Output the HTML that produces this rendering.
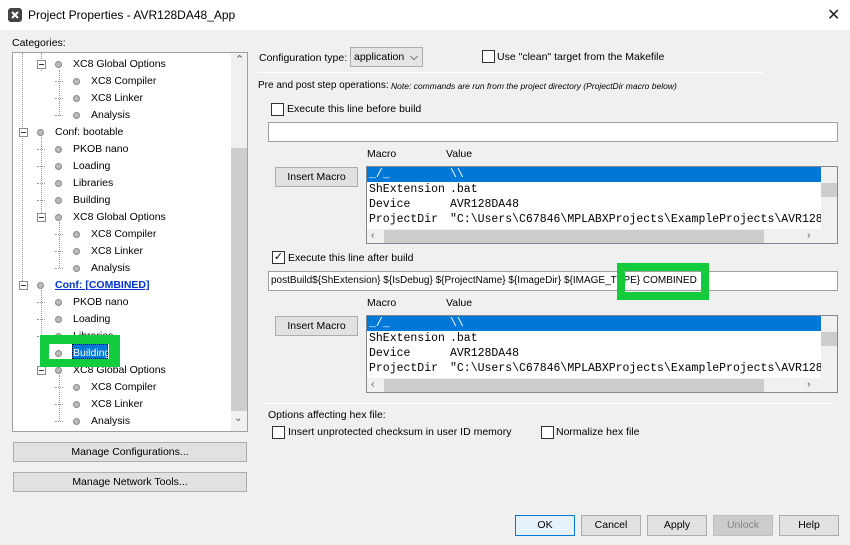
<!DOCTYPE html>
<html><head><meta charset="utf-8"><style>
*{box-sizing:border-box;margin:0;padding:0}
body{width:850px;height:545px;background:#f0f0f0;font-family:"Liberation Sans",sans-serif;font-size:10.5px;color:#000;position:relative;overflow:hidden}
.a{position:absolute;white-space:nowrap}
.btn{position:absolute;background:#e1e1e1;border:1px solid #adadad;text-align:center;font-size:10.5px}
.cb{position:absolute;width:13px;height:13px;border:1px solid #333;background:#fff}
.fld{position:absolute;background:#fff;border:1px solid #a0a0a0}
.mono{font-family:"Liberation Mono",monospace;font-size:11.5px}
.tr{position:absolute;font-size:10.5px;line-height:13px}
.ic{position:absolute;width:7px;height:7px;border-radius:50%;background:#bbb;border:1px solid #888}
.ex{position:absolute;width:9px;height:9px;border:1px solid #8a8a8a;background:#fff}
.ex:after{content:"";position:absolute;left:1px;top:3px;width:5px;height:1px;background:#333}
.dv{position:absolute;border-left:1px dotted #999}
.dh{position:absolute;border-top:1px dotted #999;width:8px}
</style></head><body>
<div class="a" style="left:0;top:0;width:850px;height:30px;background:#fff"></div>
<svg class="a" style="left:7px;top:7px" width="16" height="16" viewBox="0 0 16 16"><path d="M3 1h10l2 2v10l-2 2H3l-2-2V3z" fill="#444"/><path d="M5 5l6 6M11 5l-6 6" stroke="#fff" stroke-width="2"/></svg>
<div class="a" style="left:28px;top:8px;font-size:12px">Project Properties - AVR128DA48_App</div>
<div class="a" style="left:827px;top:5px;font-size:16px;color:#222">✕</div>

<div class="a" style="left:12px;top:37px">Categories:</div>
<div class="a" style="left:12px;top:52px;width:236px;height:380px;background:#fff;border:1px solid #a0a0a0;overflow:hidden">
<div class="a" style="left:218px;top:0;width:17px;height:378px;background:#f0f0f0"></div>
<div class="a" style="left:218px;top:95px;width:17px;height:263px;background:#cdcdcd"></div>
<div class="a" style="left:222px;top:0;font-size:11px;color:#555">&#8963;</div>
<div class="a" style="left:221px;top:360px;font-size:10px;color:#555">&#8964;</div>
</div>
<div class="a" style="left:72px;top:344px;width:36px;height:15px;background:#0078d7;border:1px dotted #000"></div>
<div id="tree"></div>
<div class="a" style="left:40px;top:335px;width:80px;height:32px;border:solid #12cc3e;border-width:9px 11px 8px 9px"></div>

<div class="btn" style="left:13px;top:442px;width:234px;height:20px;line-height:18px">Manage Configurations...</div>
<div class="btn" style="left:13px;top:472px;width:234px;height:20px;line-height:18px">Manage Network Tools...</div>

<div class="a" style="left:259px;top:52px">Configuration type:</div>
<div class="a" style="left:350px;top:47px;width:73px;height:20px;background:#e5e5e5;border:1px solid #adadad;padding:3px 3px">application &nbsp;⌵</div>
<div class="cb" style="left:482px;top:50px"></div>
<div class="a" style="left:497px;top:51px">Use "clean" target from the Makefile</div>
<div class="a" style="left:258px;top:72px;width:505px;height:1px;background:#d0d0d0;border-bottom:1px solid #fff"></div>
<div class="a" style="left:258px;top:80px;font-size:10px">Pre and post step operations:</div>
<div class="a" style="left:391px;top:81px;font-size:8.5px;font-style:italic">Note: commands are run from the project directory (ProjectDir macro below)</div>
<div class="cb" style="left:271px;top:103px"></div>
<div class="a" style="left:287px;top:103px">Execute this line before build</div>
<div class="fld" style="left:268px;top:122px;width:570px;height:20px"></div>

<div id="t1"></div>

<div class="cb" style="left:272px;top:251px;font-size:11px;line-height:11px;text-align:center">✓</div>
<div class="a" style="left:288px;top:252px">Execute this line after build</div>
<div class="fld" style="left:268px;top:271px;width:570px;height:20px"></div>
<div class="a" style="left:271px;top:275px;font-size:10px">postBuild${ShExtension} ${IsDebug} ${ProjectName} ${ImageDir} ${IMAGE_TYPE} COMBINED</div>
<div class="a" style="left:617px;top:263px;width:92px;height:37px;border:8px solid #12cc3e"></div>

<div id="t2"></div>

<div class="a" style="left:264px;top:403px;width:570px;height:1px;background:#d0d0d0;border-bottom:1px solid #fff"></div>
<div class="a" style="left:268px;top:409px">Options affecting hex file:</div>
<div class="cb" style="left:272px;top:426px"></div>
<div class="a" style="left:288px;top:426px">Insert unprotected checksum in user ID memory</div>
<div class="cb" style="left:541px;top:426px"></div>
<div class="a" style="left:556px;top:426px">Normalize hex file</div>

<div class="btn" style="left:515px;top:515px;width:60px;height:21px;line-height:19px;background:#e5f1fb;border-color:#0078d7">OK</div>
<div class="btn" style="left:581px;top:515px;width:60px;height:21px;line-height:19px">Cancel</div>
<div class="btn" style="left:647px;top:515px;width:60px;height:21px;line-height:19px">Apply</div>
<div class="btn" style="left:713px;top:515px;width:60px;height:21px;line-height:19px;background:#ccc;border-color:#bfbfbf;color:#838383">Unlock</div>
<div class="btn" style="left:779px;top:515px;width:60px;height:21px;line-height:19px">Help</div>

<script>
function tbl(id,top){
var h='<div class="a" style="left:367px;top:'+(top-18)+'px">Macro</div><div class="a" style="left:446px;top:'+(top-18)+'px">Value</div>';
h+='<div class="btn" style="left:275px;top:'+(top+1)+'px;width:83px;height:20px;line-height:18px">Insert Macro</div>';
h+='<div class="a" style="left:366px;top:'+top+'px;width:472px;height:78px;background:#fff;border:1px solid #828790;overflow:hidden">';
h+='<div class="a" style="left:0;top:0;width:454px;height:15px;background:#0078d7"></div>';
var rows=[['_/_','\\\\'],['ShExtension','.bat'],['Device','AVR128DA48'],['ProjectDir','"C:\\Users\\C67846\\MPLABXProjects\\ExampleProjects\\AVR128DA48']];
rows.forEach(function(r,i){h+='<div class="a mono" style="left:2px;top:'+(i*15+1)+'px;width:452px;overflow:hidden;color:'+(i?'#000':'#fff')+'">'+r[0]+'<span style="position:absolute;left:81px">'+r[1]+'</span></div>';});
h+='<div class="a" style="left:454px;top:0;width:17px;height:62px;background:#f0f0f0"></div><div class="a" style="left:454px;top:16px;width:17px;height:14px;background:#cdcdcd"></div>';
h+='<div class="a" style="left:0;top:62px;width:471px;height:15px;background:#f0f0f0"></div><div class="a" style="left:17px;top:63px;width:380px;height:13px;background:#cdcdcd"></div>';
h+='<div class="a" style="left:4px;top:62px;color:#555">&lsaquo;</div><div class="a" style="left:440px;top:62px;color:#555">&rsaquo;</div></div>';
document.getElementById(id).innerHTML=h;}
tbl('t1',166);tbl('t2',315);
var T=[[2,'XC8 Global Options',1],[3,'XC8 Compiler'],[3,'XC8 Linker'],[3,'Analysis'],[1,'Conf: bootable',1],[2,'PKOB nano'],[2,'Loading'],[2,'Libraries'],[2,'Building'],[2,'XC8 Global Options',1],[3,'XC8 Compiler'],[3,'XC8 Linker'],[3,'Analysis'],[1,'Conf: [COMBINED]',1,1],[2,'PKOB nano'],[2,'Loading'],[2,'Libraries'],[2,'Building',0,2],[2,'XC8 Global Options',1],[3,'XC8 Compiler'],[3,'XC8 Linker'],[3,'Analysis']];
var h='<div class="dv" style="left:22px;top:53px;height:230px"></div><div class="dv" style="left:41px;top:53px;height:18px"></div><div class="dv" style="left:41px;top:137px;height:80px"></div><div class="dv" style="left:59px;top:70px;height:46px"></div><div class="dv" style="left:59px;top:222px;height:46px"></div><div class="dv" style="left:41px;top:290px;height:80px"></div><div class="dv" style="left:59px;top:375px;height:46px"></div>';
T.forEach(function(t,i){var y=58+i*17,L=t[0],x=37+L*18;
if(t[3]!=2)h+='<div class="dh" style="left:'+(x-36)+'px;top:'+(y+6)+'px"></div>';
if(t[2])h+='<div class="ex" style="left:'+(x-36)+'px;top:'+(y+2)+'px"></div>';
h+='<div class="ic" style="left:'+(x-18)+'px;top:'+(y+3)+'px"></div>';
var st=t[3]==1?'color:#0033cc;font-weight:bold;text-decoration:underline':(t[3]==2?'color:#fff':'');
h+='<div class="tr" style="left:'+x+'px;top:'+y+'px;'+st+'">'+t[1]+'</div>';});
document.getElementById('tree').innerHTML='<div class="a" style="left:13px;top:53px;width:216px;height:378px;overflow:hidden"><div class="a" style="left:-13px;top:-53px;width:300px;height:500px">'+h+'</div></div>';
</script>
</body></html>
